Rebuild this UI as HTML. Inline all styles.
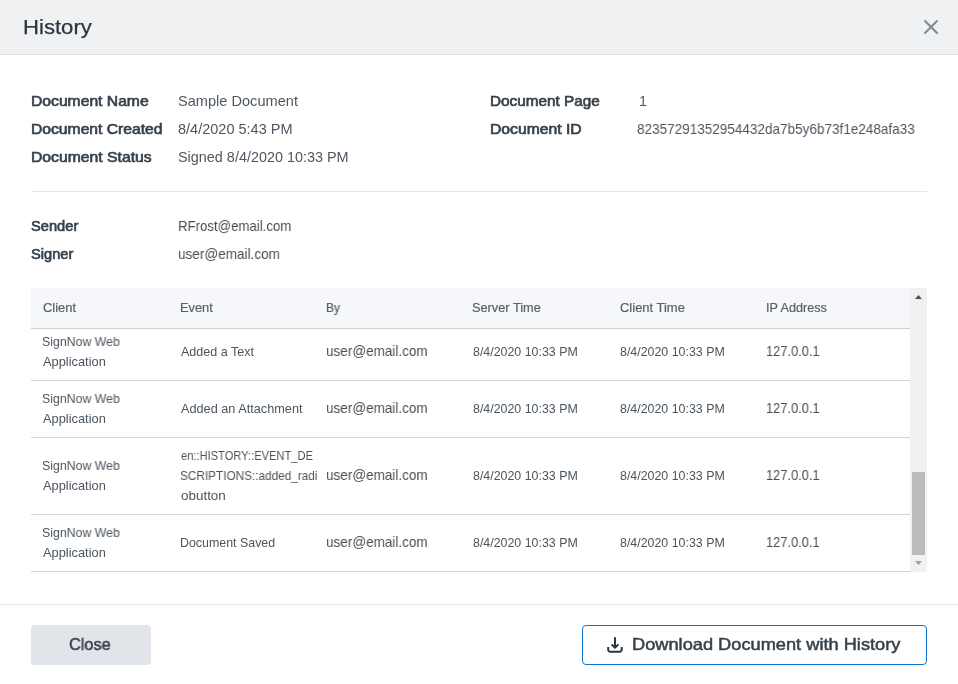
<!DOCTYPE html>
<html><head><meta charset="utf-8"><style>
*{margin:0;padding:0;box-sizing:border-box}
html,body{width:958px;height:684px;overflow:hidden;background:#fff}
body{position:relative;font-family:"Liberation Sans",sans-serif}
.t{position:absolute;white-space:nowrap;line-height:1;transform-origin:0 0;will-change:transform}
.b{position:absolute}
</style></head><body>
<div class="b" style="left:0;top:0;width:958px;height:54px;background:#f0f1f3"></div>
<div class="b" style="left:0;top:54px;width:958px;height:1px;background:#dfe2e6"></div>
<svg class="b" style="left:920px;top:17px" width="21" height="21" viewBox="0 0 21 21"><path d="M5 4L17 16M17 4L5 16" stroke="#7b8b95" stroke-width="2" stroke-linecap="round" fill="none"/></svg>
<div class="b" style="left:31px;top:191px;width:896px;height:1px;background:#e3e6ea"></div>
<div class="b" style="left:31px;top:288px;width:879px;height:40px;background:#f6f7fa"></div>
<div class="b" style="left:31px;top:328px;width:879px;height:1px;background:#d2d2d2"></div>
<div class="b" style="left:31px;top:380px;width:879px;height:1px;background:#d6d6d6"></div>
<div class="b" style="left:31px;top:437px;width:879px;height:1px;background:#d6d6d6"></div>
<div class="b" style="left:31px;top:514px;width:879px;height:1px;background:#d6d6d6"></div>
<div class="b" style="left:31px;top:571px;width:879px;height:1px;background:#d6d6d6"></div>
<div class="b" style="left:910px;top:288px;width:17px;height:284px;background:#f1f1f1"></div>
<div class="b" style="left:912px;top:472px;width:13px;height:83px;background:#bcbcbc"></div>
<svg class="b" style="left:910px;top:288px" width="17" height="284" viewBox="0 0 17 284"><path d="M5 11L8.5 7L12 11Z" fill="#505050"/><path d="M5 273L8.5 277L12 273Z" fill="#a3a3a3"/></svg>
<div class="b" style="left:0;top:604px;width:958px;height:1px;background:#e5e5e5"></div>
<div class="b" style="left:31px;top:625px;width:120px;height:40px;background:#e1e4e8;border-radius:4px"></div>
<div class="b" style="left:582px;top:625px;width:345px;height:40px;border:1px solid #0a76d2;border-radius:4px"></div>
<svg class="b" style="left:604px;top:634px" width="22" height="22" viewBox="0 0 22 22"><path d="M11 3.2V13.5M7.6 10.4L11 13.8L14.4 10.4M4.2 13V15.7A2 2 0 0 0 6.2 17.7H15.7A2 2 0 0 0 17.7 15.7V13" stroke="#2a3640" stroke-width="2" fill="none" stroke-linejoin="round"/></svg>

<div class="t" style="left:23.20px;top:16.22px;font-size:21px;color:#2b3540;-webkit-text-stroke:0.25px #2b3540;transform:scaleX(1.0533)">History</div>
<div class="t" style="left:30.50px;top:93.81px;font-size:14.4px;color:#36414b;-webkit-text-stroke:0.65px #36414b;transform:scaleX(1.0895)">Document Name</div>
<div class="t" style="left:30.50px;top:121.81px;font-size:14.4px;color:#36414b;-webkit-text-stroke:0.65px #36414b;transform:scaleX(1.0891)">Document Created</div>
<div class="t" style="left:30.50px;top:149.81px;font-size:14.4px;color:#36414b;-webkit-text-stroke:0.65px #36414b;transform:scaleX(1.0929)">Document Status</div>
<div class="t" style="left:490.20px;top:93.81px;font-size:14.4px;color:#36414b;-webkit-text-stroke:0.65px #36414b;transform:scaleX(1.0634)">Document Page</div>
<div class="t" style="left:490.20px;top:121.81px;font-size:14.4px;color:#36414b;-webkit-text-stroke:0.65px #36414b;transform:scaleX(1.0904)">Document ID</div>
<div class="t" style="left:31.00px;top:218.81px;font-size:14.4px;color:#36414b;-webkit-text-stroke:0.65px #36414b;transform:scaleX(1.0187)">Sender</div>
<div class="t" style="left:31.00px;top:246.81px;font-size:14.4px;color:#36414b;-webkit-text-stroke:0.65px #36414b;transform:scaleX(1.0163)">Signer</div>
<div class="t" style="left:178.24px;top:93.81px;font-size:14.4px;color:#4d5761;transform:scaleX(1.0131)">Sample Document</div>
<div class="t" style="left:178.00px;top:121.81px;font-size:14.4px;color:#4d5761;transform:scaleX(1.0082)">8/4/2020 5:43 PM</div>
<div class="t" style="left:178.24px;top:149.81px;font-size:14.4px;color:#4d5761;transform:scaleX(1.0012)">Signed 8/4/2020 10:33 PM</div>
<div class="t" style="left:638.50px;top:93.81px;font-size:14.4px;color:#4d5761;transform:scaleX(1.0000)">1</div>
<div class="t" style="left:637.40px;top:121.81px;font-size:14.4px;color:#4d5761;transform:scaleX(0.9408)">82357291352954432da7b5y6b73f1e248afa33</div>
<div class="t" style="left:178.00px;top:218.30px;font-size:15px;color:#4a4d50;transform:scaleX(0.8816)">RFrost@email.com</div>
<div class="t" style="left:178.00px;top:246.30px;font-size:15px;color:#4a4d50;transform:scaleX(0.9037)">user@email.com</div>
<div class="t" style="left:43.00px;top:301.50px;font-size:12.4px;color:#56616b;-webkit-text-stroke:0.2px #56616b;transform:scaleX(1.0445)">Client</div>
<div class="t" style="left:180.20px;top:301.50px;font-size:12.4px;color:#56616b;-webkit-text-stroke:0.2px #56616b;transform:scaleX(1.0352)">Event</div>
<div class="t" style="left:326.20px;top:301.50px;font-size:12.4px;color:#56616b;-webkit-text-stroke:0.2px #56616b;transform:scaleX(0.9636)">By</div>
<div class="t" style="left:472.20px;top:301.50px;font-size:12.4px;color:#56616b;-webkit-text-stroke:0.2px #56616b;transform:scaleX(1.0295)">Server Time</div>
<div class="t" style="left:620.00px;top:301.50px;font-size:12.4px;color:#56616b;-webkit-text-stroke:0.2px #56616b;transform:scaleX(1.0465)">Client Time</div>
<div class="t" style="left:766.20px;top:301.50px;font-size:12.4px;color:#56616b;-webkit-text-stroke:0.2px #56616b;transform:scaleX(1.0179)">IP Address</div>
<div class="t" style="left:42.20px;top:335.50px;font-size:12.4px;color:#4b555e;transform:scaleX(0.9932)">SignNow Web</div>
<div class="t" style="left:42.50px;top:355.50px;font-size:12.4px;color:#4b555e;transform:scaleX(1.0355)">Application</div>
<div class="t" style="left:181.00px;top:345.50px;font-size:12.4px;color:#4b555e;transform:scaleX(1.0117)">Added a Text</div>
<div class="t" style="left:326.20px;top:343.30px;font-size:15px;color:#4a4d50;transform:scaleX(0.9013)">user@email.com</div>
<div class="t" style="left:473.00px;top:345.50px;font-size:12.4px;color:#4b555e;transform:scaleX(1.0001)">8/4/2020 10:33 PM</div>
<div class="t" style="left:620.00px;top:345.50px;font-size:12.4px;color:#4b555e;transform:scaleX(1.0001)">8/4/2020 10:33 PM</div>
<div class="t" style="left:766.20px;top:343.64px;font-size:14.6px;color:#4a4d50;transform:scaleX(0.8811)">127.0.0.1</div>
<div class="t" style="left:42.20px;top:392.50px;font-size:12.4px;color:#4b555e;transform:scaleX(0.9932)">SignNow Web</div>
<div class="t" style="left:42.50px;top:412.50px;font-size:12.4px;color:#4b555e;transform:scaleX(1.0355)">Application</div>
<div class="t" style="left:181.00px;top:402.50px;font-size:12.4px;color:#4b555e;transform:scaleX(1.0255)">Added an Attachment</div>
<div class="t" style="left:326.20px;top:400.30px;font-size:15px;color:#4a4d50;transform:scaleX(0.9013)">user@email.com</div>
<div class="t" style="left:473.00px;top:402.50px;font-size:12.4px;color:#4b555e;transform:scaleX(1.0001)">8/4/2020 10:33 PM</div>
<div class="t" style="left:620.00px;top:402.50px;font-size:12.4px;color:#4b555e;transform:scaleX(1.0001)">8/4/2020 10:33 PM</div>
<div class="t" style="left:766.20px;top:400.64px;font-size:14.6px;color:#4a4d50;transform:scaleX(0.8811)">127.0.0.1</div>
<div class="t" style="left:42.20px;top:459.50px;font-size:12.4px;color:#4b555e;transform:scaleX(0.9932)">SignNow Web</div>
<div class="t" style="left:42.50px;top:479.50px;font-size:12.4px;color:#4b555e;transform:scaleX(1.0355)">Application</div>
<div class="t" style="left:181.00px;top:449.50px;font-size:12.4px;color:#4b555e;transform:scaleX(0.8978)">en::HISTORY::EVENT_DE</div>
<div class="t" style="left:180.20px;top:469.50px;font-size:12.4px;color:#4b555e;transform:scaleX(0.9502)">SCRIPTIONS::added_radi</div>
<div class="t" style="left:181.00px;top:489.50px;font-size:12.4px;color:#4b555e;transform:scaleX(1.0834)">obutton</div>
<div class="t" style="left:326.20px;top:467.30px;font-size:15px;color:#4a4d50;transform:scaleX(0.9013)">user@email.com</div>
<div class="t" style="left:473.00px;top:469.50px;font-size:12.4px;color:#4b555e;transform:scaleX(1.0001)">8/4/2020 10:33 PM</div>
<div class="t" style="left:620.00px;top:469.50px;font-size:12.4px;color:#4b555e;transform:scaleX(1.0001)">8/4/2020 10:33 PM</div>
<div class="t" style="left:766.20px;top:467.64px;font-size:14.6px;color:#4a4d50;transform:scaleX(0.8811)">127.0.0.1</div>
<div class="t" style="left:42.20px;top:526.50px;font-size:12.4px;color:#4b555e;transform:scaleX(0.9932)">SignNow Web</div>
<div class="t" style="left:42.50px;top:546.50px;font-size:12.4px;color:#4b555e;transform:scaleX(1.0355)">Application</div>
<div class="t" style="left:180.20px;top:536.50px;font-size:12.4px;color:#4b555e;transform:scaleX(1.0011)">Document Saved</div>
<div class="t" style="left:326.20px;top:534.30px;font-size:15px;color:#4a4d50;transform:scaleX(0.9013)">user@email.com</div>
<div class="t" style="left:473.00px;top:536.50px;font-size:12.4px;color:#4b555e;transform:scaleX(1.0001)">8/4/2020 10:33 PM</div>
<div class="t" style="left:620.00px;top:536.50px;font-size:12.4px;color:#4b555e;transform:scaleX(1.0001)">8/4/2020 10:33 PM</div>
<div class="t" style="left:766.20px;top:534.64px;font-size:14.6px;color:#4a4d50;transform:scaleX(0.8811)">127.0.0.1</div>
<div class="t" style="left:69.30px;top:635.61px;font-size:17px;color:#36414b;-webkit-text-stroke:0.5px #36414b;transform:scaleX(0.9595)">Close</div>
<div class="t" style="left:632.20px;top:635.61px;font-size:17px;color:#36414b;-webkit-text-stroke:0.5px #36414b;transform:scaleX(1.0720)">Download Document with History</div>
</body></html>
